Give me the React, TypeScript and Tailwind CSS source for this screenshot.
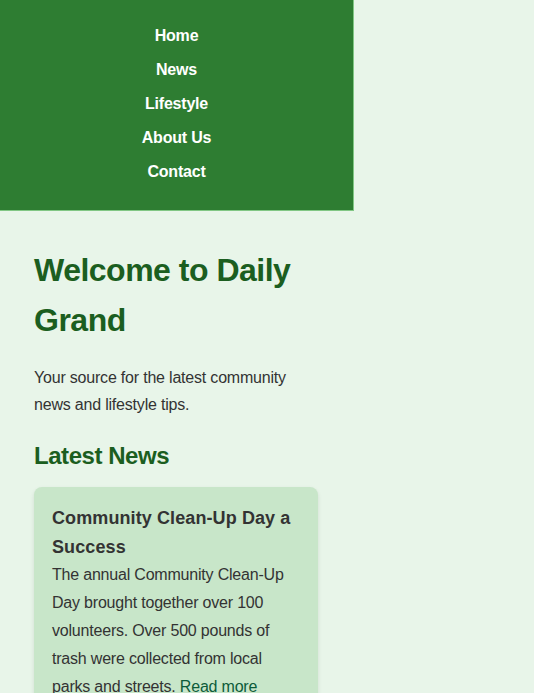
export default function App() {
  const links = ['Home', 'News', 'Lifestyle', 'About Us', 'Contact'];

  return (
    <div className="min-h-[693px] bg-[#e8f5e9] font-['Liberation_Sans',Arial,sans-serif]">
      {/* Nav */}
      <nav className="w-[354px] bg-[#2e7d32] border-r border-b border-[#81c784] pt-[19px] pb-[21px]">
        <ul className="flex flex-col items-center">
          {links.map((l) => (
            <li key={l} className="py-[8px] text-[16px] leading-[18px] font-bold text-white tracking-[-0.2px]">
              <a href="#">{l}</a>
            </li>
          ))}
        </ul>
      </nav>

      {/* Main */}
      <main className="w-[354px] pl-[34px] pr-[36px] pt-[34px]">
        <h1 className="text-[32px] leading-[50px] font-bold text-[#1b5e20] tracking-[-0.5px]">Welcome to Daily Grand</h1>
        <p className="mt-[19px] text-[16px] leading-[27px] text-[#333] tracking-[-0.2px]">
          Your source for the latest community news and lifestyle tips.
        </p>
        <h2 className="mt-[20px] text-[24px] leading-[36px] font-bold text-[#1b5e20] tracking-[-0.45px]">Latest News</h2>

        <article className="mt-[13px] bg-[#c8e6c9] rounded-[8px] shadow-[0_2px_4px_rgba(0,0,0,0.1)] px-[18px] pt-[17px] pb-[18px]">
          <h3 className="text-[18px] leading-[29px] font-bold text-[#333] tracking-[0.1px]">Community Clean-Up Day a Success</h3>
          <p className="-mt-[1px] text-[16px] leading-[28px] text-[#333] tracking-[-0.2px]">
            The annual Community Clean-Up Day brought together over 100 volunteers. Over 500 pounds of trash were
            collected from local parks and streets.{' '}
            <a href="#" className="text-[#0d5c3a]">Read more</a>
          </p>
        </article>
      </main>
    </div>
  );
}
